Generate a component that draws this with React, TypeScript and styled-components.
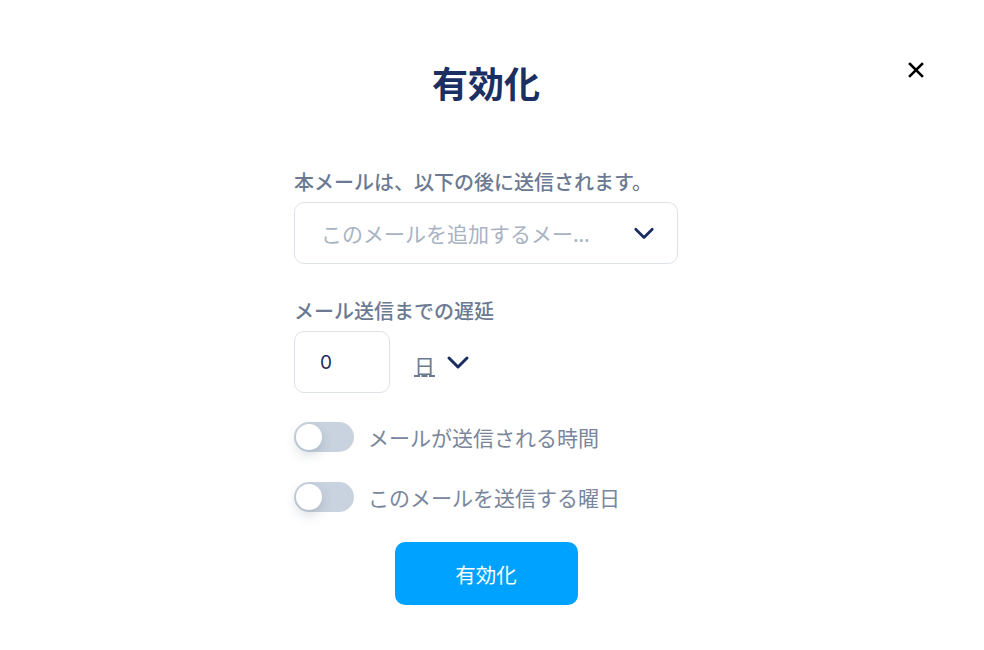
import styled, { createGlobalStyle } from 'styled-components';
import { useState } from 'react';

const GlobalStyle = createGlobalStyle`
  html, body {
    margin: 0;
    padding: 0;
    background: #ffffff;
    font-family: "Noto Sans CJK JP", "Noto Sans", sans-serif;
  }
`

const ChevronDown = ({ size = 22 }: { size?: number }) => (
  <svg width={size} height={size} viewBox="0 0 24 24" fill="none" stroke="#1b2d5e" strokeWidth="3" strokeLinecap="round" strokeLinejoin="round">
    <polyline points="3 8 12 17 21 8" />
  </svg>
)

const CloseIcon = () => (
  <svg width="16" height="16" viewBox="0 0 16 16" stroke="#000" strokeWidth="2.6" strokeLinecap="square">
    <line x1="2" y1="2" x2="14" y2="14" />
    <line x1="14" y1="2" x2="2" y2="14" />
  </svg>
)

const App = () => {
  const [timeOn, setTimeOn] = useState(false)
  const [dayOn, setDayOn] = useState(false)

  return (
    <>
      <GlobalStyle />
      <Page>
        <Header>
          <Title>有効化</Title>
          <CloseButton aria-label="close">
            <CloseIcon />
          </CloseButton>
        </Header>
        <Form>
          <Field spacing={34}>
            <Label>本メールは、以下の後に送信されます。</Label>
            <Select>
              <Placeholder>このメールを追加するメールを選択</Placeholder>
              <ChevronDown />
            </Select>
          </Field>
          <Field spacing={29}>
            <Label>メール送信までの遅延</Label>
            <DelayRow>
              <NumberBox>0</NumberBox>
              <Unit>日</Unit>
              <ChevronDown size={24} />
            </DelayRow>
          </Field>
          <ToggleRow>
            <Toggle on={timeOn} onClick={() => setTimeOn(!timeOn)}><Knob on={timeOn} /></Toggle>
            <ToggleText>メールが送信される時間</ToggleText>
          </ToggleRow>
          <ToggleRow>
            <Toggle on={dayOn} onClick={() => setDayOn(!dayOn)}><Knob on={dayOn} /></Toggle>
            <ToggleText>このメールを送信する曜日</ToggleText>
          </ToggleRow>
          <ButtonRow>
            <Submit>有効化</Submit>
          </ButtonRow>
        </Form>
      </Page>
    </>
  )
}

type toggleProps = {
  on: boolean
}

type fieldProps = {
  spacing: number
}

const Page = styled.div`
  width: 972px;
  height: 650px;
  position: relative;
  display: flex;
  flex-direction: column;
  align-items: center;
`

const Header = styled.div`
  padding-top: 54px;
  height: 58px;
  display: flex;
  justify-content: center;
`

const Title = styled.h1`
  margin: 0;
  font-size: 36px;
  font-weight: 700;
  line-height: 56px;
  color: #1b2f63;
`

const CloseButton = styled.button`
  position: absolute;
  top: 62px;
  right: 48px;
  border: none;
  background: none;
  padding: 0;
  cursor: pointer;
  line-height: 0;
`

const Form = styled.div`
  width: 384px;
  margin-top: 57px;
  display: flex;
  flex-direction: column;
`

const Field = styled.div<fieldProps>`
  display: flex;
  flex-direction: column;
  margin-bottom: ${props => props.spacing}px;
`

const Label = styled.div`
  font-size: 20px;
  font-weight: 500;
  color: #6b7a92;
  line-height: 26px;
  margin-bottom: 7px;
`

const Select = styled.div`
  height: 62px;
  box-sizing: border-box;
  border: 1px solid #dde2e8;
  border-radius: 10px;
  display: flex;
  align-items: center;
  justify-content: space-between;
  padding: 0 22px 0 26px;
`

const Placeholder = styled.span`
  font-family: "Noto Sans", "Noto Sans CJK JP", sans-serif;
  font-size: 21px;
  color: #a9b3c3;
  white-space: nowrap;
  overflow: hidden;
  text-overflow: ellipsis;
  max-width: 276px;
`

const DelayRow = styled.div`
  display: flex;
  align-items: center;
`

const NumberBox = styled.div`
  width: 96px;
  height: 62px;
  box-sizing: border-box;
  border: 1px solid #dde2e8;
  border-radius: 10px;
  display: flex;
  align-items: center;
  padding-left: 25px;
  font-size: 19px;
  color: #1b2d5e;
  font-family: "Inter", "Noto Sans", sans-serif;
`

const Unit = styled.span`
  margin-left: 24px;
  margin-right: 11px;
  font-size: 21px;
  color: #6b7a92;
  border-bottom: 2px dashed #6b7a92;
  line-height: 18px;
  padding-bottom: 1px;
  margin-top: 8px;
`

const ToggleRow = styled.div`
  display: flex;
  align-items: center;
  gap: 14px;
  margin-bottom: 30px;
`

const Toggle = styled.div<toggleProps>`
  width: 60px;
  height: 30px;
  border-radius: 15px;
  background: ${props => props.on ? '#00a2ff' : '#c9d3df'};
  position: relative;
  cursor: pointer;
  flex-shrink: 0;
`

const Knob = styled.div<toggleProps>`
  position: absolute;
  top: 2px;
  left: ${props => props.on ? '32px' : '2px'};
  width: 26px;
  height: 26px;
  border-radius: 50%;
  background: #fff;
  box-shadow: 0 5px 12px rgba(40, 60, 90, 0.18);
`

const ToggleText = styled.span`
  font-size: 21px;
  font-weight: 400;
  color: #7a869b;
`

const ButtonRow = styled.div`
  display: flex;
  justify-content: center;
`

const Submit = styled.button`
  width: 183px;
  height: 63px;
  border: none;
  border-radius: 10px;
  background: #00a2ff;
  color: #fff;
  font-size: 20.5px;
  font-family: "Noto Sans CJK JP", sans-serif;
  cursor: pointer;
`

export default App
